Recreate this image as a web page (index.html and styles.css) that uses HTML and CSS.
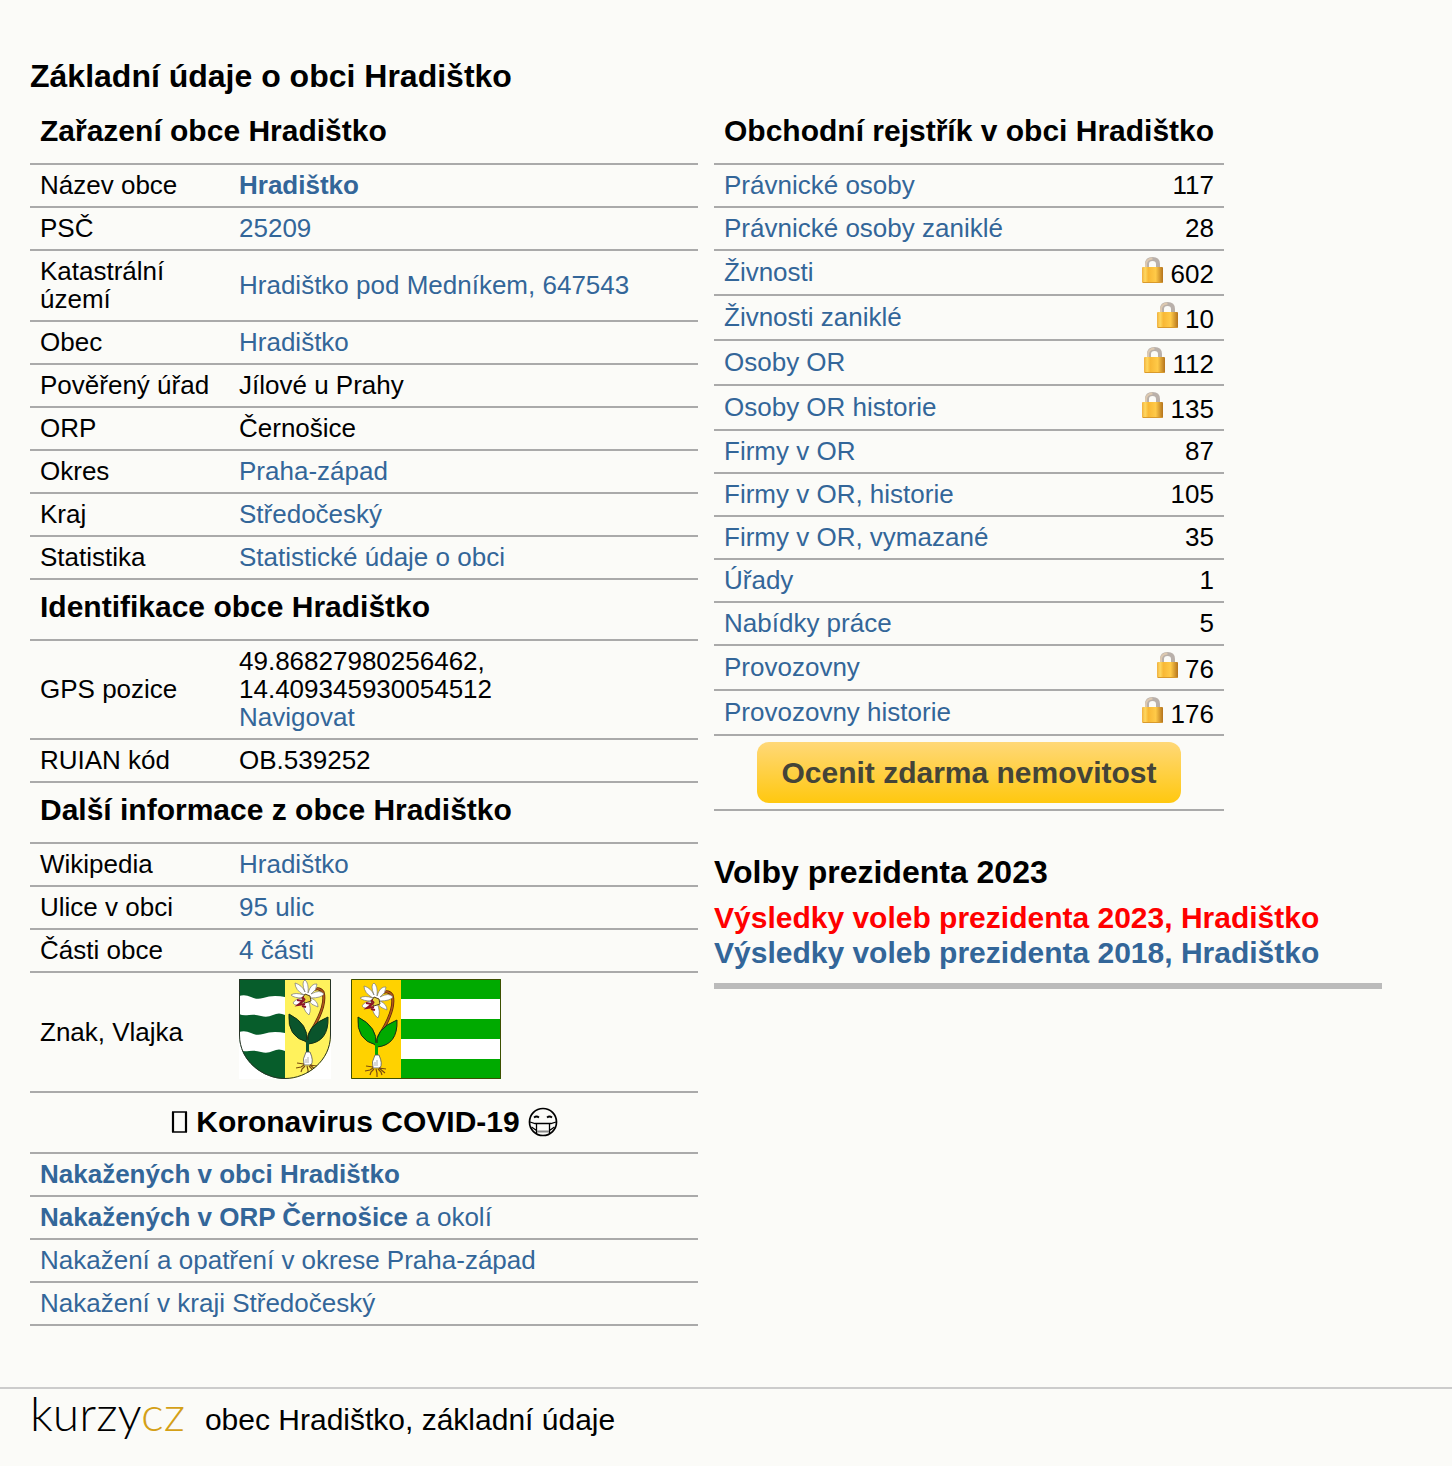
FILE: index.html
```html
<!DOCTYPE html>
<html lang="cs">
<head>
<meta charset="utf-8">
<meta name="viewport" content="width=device-width, initial-scale=1">
<title>Obec Hradištko, základní údaje</title>
<link rel="stylesheet" href="styles.css">
</head>
<body>
<svg class="defs" width="0" height="0" aria-hidden="true">
  <defs>
    <linearGradient id="gold" x1="0" y1="0" x2="1" y2="0">
      <stop offset="0" stop-color="#f0b040"/><stop offset=".15" stop-color="#ffd860"/><stop offset=".3" stop-color="#f8b835"/><stop offset=".65" stop-color="#ffca48"/><stop offset="1" stop-color="#b5741c"/>
    </linearGradient>
    <symbol id="lock" viewBox="0 0 21 26">
      <path d="M5 12V7Q5 2 10.500 2T16 7V12" fill="none" stroke="#b9b0aa" stroke-width="4"/>
      <path d="M4 12V7Q4.500 2 10.500 1.500" fill="none" stroke="#ddc9b0" stroke-width="2"/>
      <rect x="0" y="10" width="21" height="16" rx="1" fill="url(#gold)"/>
      <path d="M1 25.500h19" stroke="#d99a2c"/>
    </symbol>
    <symbol id="flower" viewBox="0 0 46 100">
      <path d="M26 12Q34 7 38 13C42 26 32 43 25 54L22 64" fill="none" stroke="#5a2408" stroke-width="3"/>
      <path d="M26 12Q34 7 38 13C42 26 32 43 25 54L22 64" fill="none" stroke="#b0561a" stroke-width="1.600"/>
      <path d="M22 63Q2 58 4 35Q24 45 22 63ZM23 65Q20 47 43 38Q44 63 23 65Z" stroke="#123016" stroke-width="1"/>
      <path d="M22.500 61V76" stroke-width="3"/>
      <path d="M19 16Q10 11 10 4Q17 6 20 13Q16 3 20 1Q24 4 23 14Q26 4 32 5Q32 11 26 15Q35 10 39 15Q36 19 26 19Q33 22 33 28Q26 26 23 21Q27 30 24 36Q17 31 19 22Q11 29 8 24Q10 20 17 19Q9 19 6 16Q10 13 19 16Z" fill="#fff" stroke="#777" stroke-width=".7"/>
      <path d="M20 15L25 17L26 22L20 24L17 20Z" fill="#ead23a" stroke="#54401c" stroke-width="1"/>
      <path d="M12 21l6 1-5 4 7-1M17 27l4 1M17 18l3 3" fill="none" stroke="#8b1428" stroke-width="2"/>
      <path d="M21 73h4Q29 82 26 86H19Q17 80 21 73Z" fill="#fff" stroke="#555" stroke-width=".8"/>
      <path d="M23 78v6M21 80v4" stroke="#999" stroke-width=".8" fill="none"/>
      <path d="M19 85l-7-1M19 86l-3 2-5 1M20 87l-3 3-1 3M22 87l1 4v4M24 87l3 3 1 3M25 86l7 1M25 86l6 5" fill="none" stroke="#7a4c10" stroke-width="1.200"/>
    </symbol>
    <clipPath id="shield"><path d="M0 0H92V56C92 82 68 100 46 100S0 82 0 56Z"/></clipPath>
  </defs>
</svg>

<main class="page">
  <h1 class="title">Základní údaje o obci Hradištko</h1>
  <div class="columns">
    <section>
      <table class="data details">
        <tbody>
          <tr><th class="group" colspan="2">Zařazení obce Hradištko</th></tr>
          <tr><th class="label">Název obce</th><td><a href="#"><b>Hradištko</b></a></td></tr>
          <tr><th class="label">PSČ</th><td><a href="#">25209</a></td></tr>
          <tr><th class="label">Katastrální území</th><td><a href="#">Hradištko pod Medníkem, 647543</a></td></tr>
          <tr><th class="label">Obec</th><td><a href="#">Hradištko</a></td></tr>
          <tr><th class="label">Pověřený úřad</th><td>Jílové u Prahy</td></tr>
          <tr><th class="label">ORP</th><td>Černošice</td></tr>
          <tr><th class="label">Okres</th><td><a href="#">Praha-západ</a></td></tr>
          <tr><th class="label">Kraj</th><td><a href="#">Středočeský</a></td></tr>
          <tr><th class="label">Statistika</th><td><a href="#">Statistické údaje o obci</a></td></tr>
        </tbody>
        <tbody>
          <tr><th class="group" colspan="2">Identifikace obce Hradištko</th></tr>
          <tr><th class="label">GPS pozice</th><td>49.86827980256462,<br>14.409345930054512<br><a href="#">Navigovat</a></td></tr>
          <tr><th class="label">RUIAN kód</th><td>OB.539252</td></tr>
        </tbody>
        <tbody>
          <tr><th class="group" colspan="2">Další informace z obce Hradištko</th></tr>
          <tr><th class="label">Wikipedia</th><td><a href="#">Hradištko</a></td></tr>
          <tr><th class="label">Ulice v obci</th><td><a href="#">95 ulic</a></td></tr>
          <tr><th class="label">Části obce</th><td><a href="#">4 části</a></td></tr>
          <tr><th class="label">Znak, Vlajka</th><td>
            <div class="symbols">
              <svg width="92" height="100" viewBox="0 0 92 100" role="img" aria-label="Znak">
                <path d="M0 0H92V100H0Z" fill="#fff"/>
                <g clip-path="url(#shield)">
                  <path d="M0 0H46V100H0Z" fill="#075d2b"/>
                  <path d="M46 0H92V100H46Z" fill="#fff25c"/>
                  <path id="wave" d="M0 17Q6 15 12 18T24 19T36 17T46 18V36Q40 33 34 36T22 37T10 36T0 35Z" fill="#fff"/>
                  <use href="#wave" y="36"/>
                  <use href="#flower" x="46" width="46" height="100" fill="#0a542c" stroke="#0a542c"/>
                </g>
                <path d="M.5 .5H91.500V56C91.500 82 68 99.500 46 99.500S.5 82 .5 56Z" fill="none" stroke="#263326" stroke-width="1"/>
              </svg>
              <svg width="150" height="100" viewBox="0 0 150 100" role="img" aria-label="Vlajka">
                <path d="M0 0H150V100H0Z" fill="#00aa00"/>
                <path d="M50 20H150V40H50ZM50 60H150V80H50Z" fill="#fff"/>
                <path d="M0 0H50V100H0Z" fill="#ffd200"/>
                <use href="#flower" x="3" y="3" width="46" height="100" fill="#00aa00" stroke="#00aa00"/>
                <path d="M.5 .5H149.500V99.500H.5Z" fill="none" stroke="#3c5000" stroke-width="1"/>
              </svg>
            </div>
          </td></tr>
        </tbody>
        <tbody>
          <tr><th class="group covid" colspan="2">
            <svg width="18" height="22" viewBox="0 0 18 22" aria-hidden="true"><path d="M2 1H17M2 21H17" stroke="#000" stroke-width="1.500"/><path d="M3 1V21M16 1V21" stroke="#000" stroke-width="2.200"/></svg>
            Koronavirus COVID-19
            <svg class="mask" width="30" height="30" viewBox="0 0 30 30" aria-hidden="true"><g fill="none" stroke="#000" stroke-width="1.700"><circle cx="15" cy="15" r="13.500"/><path d="M6 10.500q2.500-2 5 0M19 10.500q2.500-2 5 0"/><path d="M2 15L7 16.500H23L28 15M8.500 16.500V26M21.500 16.500V26M3.500 20l5 3.500M26.500 20l-5 3.500" stroke-width="1.300"/><path d="M9 24.500H21" stroke="#888" stroke-width="2"/></g></svg>
          </th></tr>
          <tr><td colspan="2"><a href="#"><b>Nakažených v obci Hradištko</b></a></td></tr>
          <tr><td colspan="2"><a href="#"><b>Nakažených v ORP Černošice</b> a okolí</a></td></tr>
          <tr><td colspan="2"><a href="#">Nakažení a opatření v okrese Praha-západ</a></td></tr>
          <tr><td colspan="2"><a href="#">Nakažení v kraji Středočeský</a></td></tr>
        </tbody>
      </table>
    </section>

    <section>
      <table class="data register">
        <tbody>
          <tr><th class="group" colspan="2">Obchodní rejstřík v obci Hradištko</th></tr>
          <tr><td><a href="#">Právnické osoby</a></td><td class="count">117</td></tr>
          <tr><td><a href="#">Právnické osoby zaniklé</a></td><td class="count">28</td></tr>
          <tr class="locked"><td><a href="#">Živnosti</a></td><td class="count"><svg class="lock"><use href="#lock"/></svg> 602</td></tr>
          <tr class="locked"><td><a href="#">Živnosti zaniklé</a></td><td class="count"><svg class="lock"><use href="#lock"/></svg> 10</td></tr>
          <tr class="locked"><td><a href="#">Osoby OR</a></td><td class="count"><svg class="lock"><use href="#lock"/></svg> 112</td></tr>
          <tr class="locked"><td><a href="#">Osoby OR historie</a></td><td class="count"><svg class="lock"><use href="#lock"/></svg> 135</td></tr>
          <tr><td><a href="#">Firmy v OR</a></td><td class="count">87</td></tr>
          <tr><td><a href="#">Firmy v OR, historie</a></td><td class="count">105</td></tr>
          <tr><td><a href="#">Firmy v OR, vymazané</a></td><td class="count">35</td></tr>
          <tr><td><a href="#">Úřady</a></td><td class="count">1</td></tr>
          <tr><td><a href="#">Nabídky práce</a></td><td class="count">5</td></tr>
          <tr class="locked"><td><a href="#">Provozovny</a></td><td class="count"><svg class="lock"><use href="#lock"/></svg> 76</td></tr>
          <tr class="locked"><td><a href="#">Provozovny historie</a></td><td class="count"><svg class="lock"><use href="#lock"/></svg> 176</td></tr>
          <tr><td class="action" colspan="2"><button type="button" class="cta">Ocenit zdarma nemovitost</button></td></tr>
        </tbody>
      </table>
      <div class="elections">
        <h2 class="title">Volby prezidenta 2023</h2>
        <a class="current" href="#">Výsledky voleb prezidenta 2023, Hradištko</a>
        <a href="#">Výsledky voleb prezidenta 2018, Hradištko</a>
      </div>
    </section>
  </div>
</main>

<footer class="footer">
  <a class="logo" href="#">kurzy<span>cz</span></a>
  <span>obec Hradištko, základní údaje</span>
</footer>
</body>
</html>
```
FILE: styles.css
```css
* { box-sizing: border-box; }

body {
  margin: 0;
  background: #fbfbf8;
  color: #000;
  font: 26px/28px "Liberation Sans", Arial, sans-serif;
}

a { color: #369; text-decoration: none; }
a:hover { text-decoration: underline; }

.defs { display: block; }

.page { padding: 58px 70px 61px 30px; }

.title {
  margin: 0;
  font-size: 32px;
  line-height: 36px;
}

.columns {
  display: grid;
  grid-template-columns: 1fr 1fr;
  gap: 16px;
  padding-top: 10px;
}

.data {
  width: 100%;
  border-spacing: 0;
}

.data td,
.data th {
  padding: 6px 10px 7px;
  border-bottom: 2px solid #aaa;
  text-align: left;
  vertical-align: middle;
}

.data .label { width: 199px; font-weight: normal; }

.data .group {
  padding: 10px 10px 15px;
  font-size: 30px;
  line-height: 34px;
}

.data .covid { padding: 12px 10px 13px; text-align: center; }
.covid svg { vertical-align: -1px; }
.covid .mask { vertical-align: -5px; }

.symbols { display: flex; gap: 20px; padding-bottom: 5px; }

.register { width: 510px; max-width: 100%; }
.register .group { padding-right: 0; white-space: nowrap; }
.register .count { text-align: right; }
.register .locked td { height: 45px; }
.register .locked .count { padding: 6px 10px; }

.lock { width: 21px; height: 26px; vertical-align: 0; }

.data .action { padding: 6px 10px; text-align: center; }

.cta {
  display: inline-block;
  height: 61px;
  padding: 0 24px;
  border: 0;
  border-radius: 12px;
  background: linear-gradient(#ffd878, #ffc80f);
  color: #444438;
  font: bold 30px/34px "Liberation Sans", Arial, sans-serif;
  vertical-align: top;
  cursor: pointer;
}

.elections {
  display: flex;
  flex-direction: column;
  margin-top: 43px;
  padding-bottom: 13px;
  border-bottom: 6px solid #bbb;
  font-size: 30px;
  font-weight: bold;
  line-height: 35px;
}

.elections .title { margin-bottom: 10px; }
.elections .current { color: #f00; }

.footer {
  display: flex;
  align-items: flex-start;
  gap: 20px;
  padding: 4px 30px 19px;
  border-top: 2px solid #ccc;
  font-size: 30px;
  line-height: 54px;
}

.logo {
  color: #000;
  font: 300 48px/40px Lato, sans-serif;
}

.logo span { color: #d4a017; }
```
